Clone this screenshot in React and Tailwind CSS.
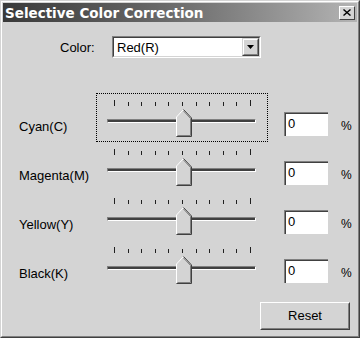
import React from 'react';

const rows = [
  { label: 'Cyan(C)', focused: true },
  { label: 'Magenta(M)' },
  { label: 'Yellow(Y)' },
  { label: 'Black(K)' },
];

const Thumb = () => (
  <svg width="16" height="28" viewBox="0 0 16 28" className="absolute left-[79px] top-[15px]">
    <polygon points="0.5,8 7.5,0.5 15.5,9 15.5,27.5 0.5,27.5" fill="#d4d4d4" />
    <polyline points="0.5,27 0.5,8 7.5,0.5" fill="none" stroke="#ffffff" strokeWidth="1" />
    <polyline points="7.5,0.5 15.5,9 15.5,27.5 0.5,27.5" fill="none" stroke="#404040" strokeWidth="1" />
    <polyline points="7.5,2 14.5,9.5 14.5,26.5 1.5,26.5" fill="none" stroke="#808080" strokeWidth="1" />
  </svg>
);

const Slider = ({ focused }) => (
  <div
    className={`relative w-[172px] h-[49px] shrink-0 border ${
      focused ? 'border-dotted border-black' : 'border-transparent'
    }`}
  >
    {/* tick marks */}
    <div className="absolute left-[17px] top-[6px] w-[137px] h-[6px] flex justify-between items-end">
      {Array.from({ length: 11 }).map((_, i) => (
        <div
          key={i}
          className={`w-px bg-[#202020] ${i === 0 || i === 10 ? 'h-[6px]' : 'h-[4px]'}`}
        />
      ))}
    </div>
    {/* groove */}
    <div className="absolute left-[10px] top-[25px] w-[149px] h-[4px] border border-t-[#808080] border-l-[#808080] border-b-white border-r-white bg-[#404040]" />
    <Thumb />
  </div>
);

const Row = ({ label, focused }) => (
  <div className="flex items-start h-[49px]">
    <div className="w-[93px] shrink-0 pl-[16px] mt-[26px] text-[13px] leading-[15px] text-black">{label}</div>
    <Slider focused={focused} />
    <div className="ml-[16px] mt-[19px] w-[44px] h-[24px] bg-white border-t border-l border-[#808080] border-b-white border-r-white">
      <div className="w-full h-full border-t border-l border-[#404040] border-b-[#d4d4d4] border-r-[#d4d4d4] pl-[2px] text-[13px] leading-[19px] text-black">
        0
      </div>
    </div>
    <div className="ml-[13px] mt-[26px] text-[12px] leading-[15px] text-black">%</div>
  </div>
);

export default function App() {
  return (
    <div
      className="w-[360px] h-[338px] bg-[#d4d4d4] border border-t-[#d4d4d4] border-l-[#d4d4d4] border-r-[#404040] border-b-[#404040]"
      style={{ fontFamily: '"Liberation Sans", Arial, sans-serif' }}
    >
      <div className="w-full h-full border border-t-white border-l-white border-r-[#808080] border-b-[#808080] p-px flex flex-col">
        {/* title bar */}
        <div className="h-[19px] flex items-center justify-between bg-gradient-to-r from-[#3a3a3a] via-[#6e6e6e] to-[#b4b4b4] pl-[2px] pr-[2px]">
          <span
            className="text-white font-bold text-[13.5px] leading-[16px]"
            style={{ fontFamily: '"DejaVu Sans", Verdana, sans-serif' }}
          >
            Selective Color Correction
          </span>
          <div className="w-[16px] h-[14px] bg-[#d4d4d4] border border-t-white border-l-white border-r-[#404040] border-b-[#404040] flex items-center justify-center">
            <svg width="8" height="7" viewBox="0 0 8 7">
              <path d="M0.5 0.5 L7.5 6.5 M7.5 0.5 L0.5 6.5" stroke="#000" strokeWidth="1.4" />
            </svg>
          </div>
        </div>

        {/* color select */}
        <div className="flex items-center mt-[14px] h-[22px]">
          <div className="ml-[57px] w-[40px] text-[13px] leading-[15px] text-black">Color:</div>
          <div className="ml-[12px] w-[149px] h-[22px] bg-white border border-t-[#808080] border-l-[#808080] border-b-white border-r-white">
            <div className="w-full h-full flex items-center border border-t-[#404040] border-l-[#404040] border-b-[#d4d4d4] border-r-[#d4d4d4]">
              <span className="flex-1 pl-[3px] text-[13px] leading-[15px] text-black">Red(R)</span>
              <div className="w-[17px] h-[18px] bg-[#d4d4d4] border border-t-[#d4d4d4] border-l-[#d4d4d4] border-r-[#404040] border-b-[#404040]">
                <div className="w-full h-full border border-t-white border-l-white border-r-[#808080] border-b-[#808080] flex items-center justify-center">
                  <svg width="7" height="4" viewBox="0 0 7 4">
                    <polygon points="0,0 7,0 3.5,4" fill="#000" />
                  </svg>
                </div>
              </div>
            </div>
          </div>
        </div>

        {/* sliders */}
        <div className="mt-[35px] flex flex-col">
          {rows.map((r) => (
            <Row key={r.label} label={r.label} focused={r.focused} />
          ))}
        </div>

        {/* reset */}
        <div className="flex justify-end mt-[13px] pr-[7px]">
          <button className="w-[90px] h-[28px] bg-[#d4d4d4] border border-t-white border-l-white border-r-[#404040] border-b-[#404040]">
            <div className="w-full h-full border border-t-[#d4d4d4] border-l-[#d4d4d4] border-r-[#808080] border-b-[#808080] flex items-center justify-center text-[13px] text-black">
              Reset
            </div>
          </button>
        </div>
      </div>
    </div>
  );
}
